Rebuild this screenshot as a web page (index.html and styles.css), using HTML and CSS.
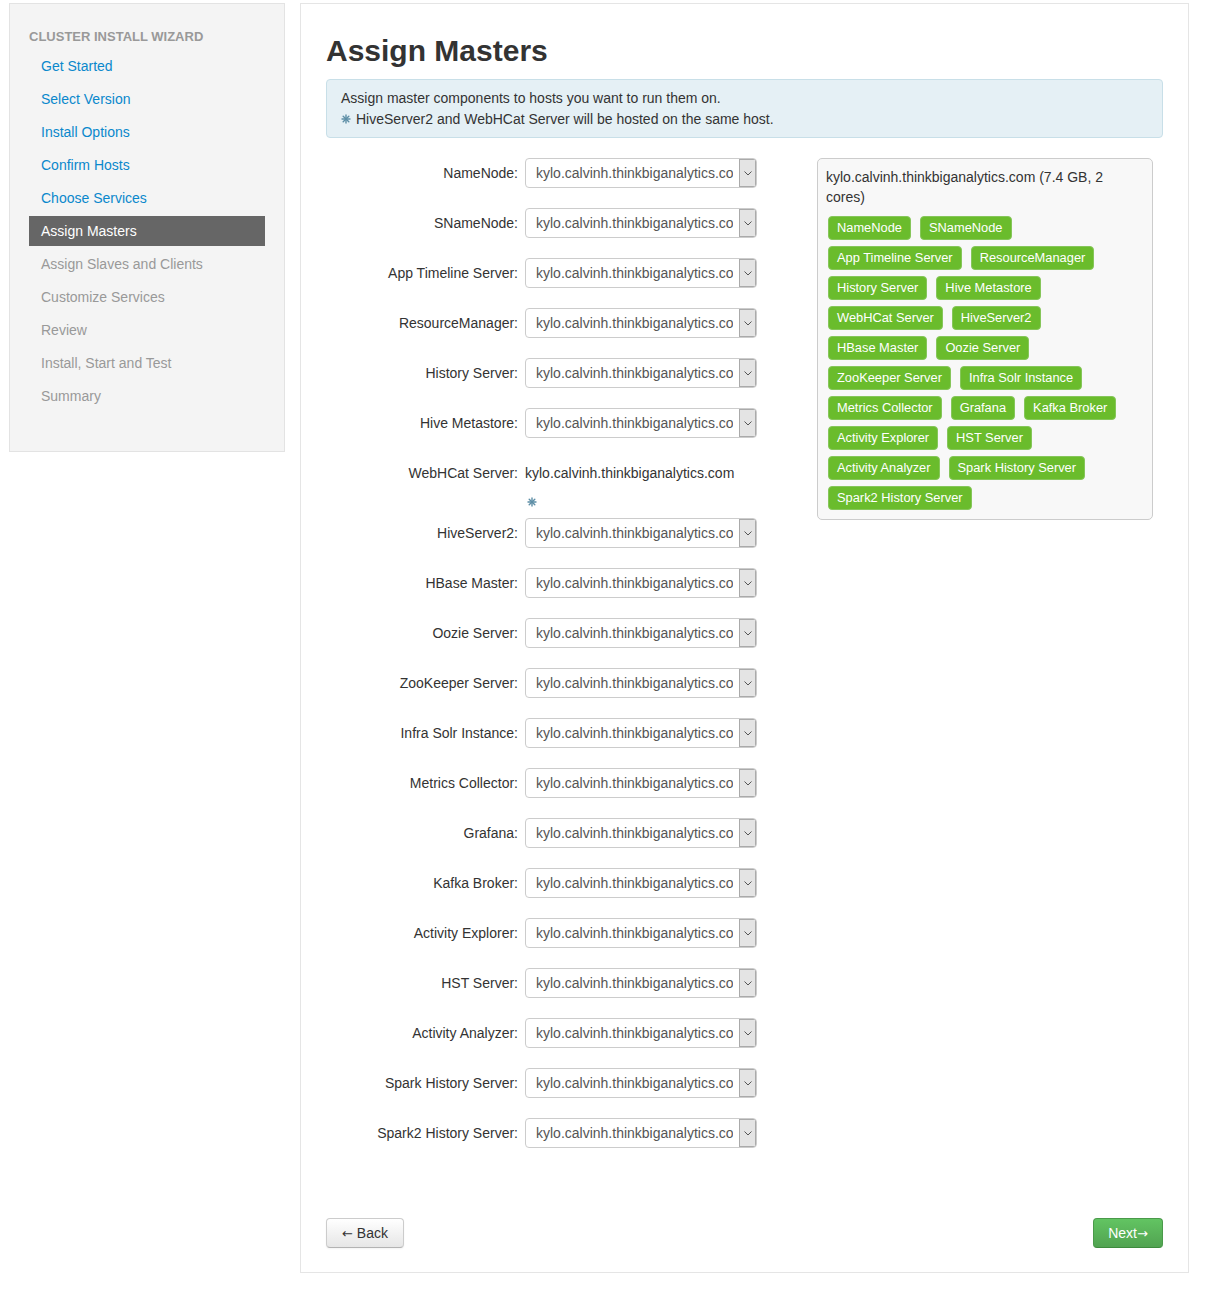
FILE: index.html
```html
<!DOCTYPE html>
<html>
<head>
<meta charset="utf-8">
<title>Assign Masters</title>
<link rel="stylesheet" href="styles.css">
</head>
<body>
<div class="page">
  <aside class="sidebar">
    <div class="side-title">CLUSTER INSTALL WIZARD</div>
    <ul class="steps">
      <li class="step done">Get Started</li>
      <li class="step done">Select Version</li>
      <li class="step done">Install Options</li>
      <li class="step done">Confirm Hosts</li>
      <li class="step done">Choose Services</li>
      <li class="step active">Assign Masters</li>
      <li class="step todo">Assign Slaves and Clients</li>
      <li class="step todo">Customize Services</li>
      <li class="step todo">Review</li>
      <li class="step todo">Install, Start and Test</li>
      <li class="step todo">Summary</li>
    </ul>
  </aside>

  <main class="panel">
    <h2 class="title">Assign Masters</h2>
    <div class="alert">
      <div>Assign master components to hosts you want to run them on.</div>
      <div class="alert-line"><svg class="ast" viewBox="0 0 10 10"><g stroke="currentColor" stroke-width="1.4" stroke-linecap="round"><line x1="5" y1="1" x2="5" y2="9"/><line x1="1" y1="5" x2="9" y2="5"/><line x1="2.2" y1="2.2" x2="7.8" y2="7.8"/><line x1="7.8" y1="2.2" x2="2.2" y2="7.8"/></g></svg> HiveServer2 and WebHCat Server will be hosted on the same host.</div>
    </div>

    <div class="assign">
      <div class="form">
        <div class="row"><label class="lbl">NameNode:</label><div class="sel"><span class="sel-text">kylo.calvinh.thinkbiganalytics.com</span><span class="sel-btn"><svg viewBox="0 0 8 5"><path d="M0.5 0.5 L4 4 L7.5 0.5" fill="none" stroke="#555" stroke-width="1"/></svg></span></div></div>
        <div class="row"><label class="lbl">SNameNode:</label><div class="sel"><span class="sel-text">kylo.calvinh.thinkbiganalytics.com</span><span class="sel-btn"><svg viewBox="0 0 8 5"><path d="M0.5 0.5 L4 4 L7.5 0.5" fill="none" stroke="#555" stroke-width="1"/></svg></span></div></div>
        <div class="row"><label class="lbl">App Timeline Server:</label><div class="sel"><span class="sel-text">kylo.calvinh.thinkbiganalytics.com</span><span class="sel-btn"><svg viewBox="0 0 8 5"><path d="M0.5 0.5 L4 4 L7.5 0.5" fill="none" stroke="#555" stroke-width="1"/></svg></span></div></div>
        <div class="row"><label class="lbl">ResourceManager:</label><div class="sel"><span class="sel-text">kylo.calvinh.thinkbiganalytics.com</span><span class="sel-btn"><svg viewBox="0 0 8 5"><path d="M0.5 0.5 L4 4 L7.5 0.5" fill="none" stroke="#555" stroke-width="1"/></svg></span></div></div>
        <div class="row"><label class="lbl">History Server:</label><div class="sel"><span class="sel-text">kylo.calvinh.thinkbiganalytics.com</span><span class="sel-btn"><svg viewBox="0 0 8 5"><path d="M0.5 0.5 L4 4 L7.5 0.5" fill="none" stroke="#555" stroke-width="1"/></svg></span></div></div>
        <div class="row"><label class="lbl">Hive Metastore:</label><div class="sel"><span class="sel-text">kylo.calvinh.thinkbiganalytics.com</span><span class="sel-btn"><svg viewBox="0 0 8 5"><path d="M0.5 0.5 L4 4 L7.5 0.5" fill="none" stroke="#555" stroke-width="1"/></svg></span></div></div>
        <div class="row row-static"><label class="lbl">WebHCat Server:</label><div class="static">kylo.calvinh.thinkbiganalytics.com</div></div>
        <div class="ast-row"><svg class="ast" viewBox="0 0 10 10"><g stroke="currentColor" stroke-width="1.4" stroke-linecap="round"><line x1="5" y1="1" x2="5" y2="9"/><line x1="1" y1="5" x2="9" y2="5"/><line x1="2.2" y1="2.2" x2="7.8" y2="7.8"/><line x1="7.8" y1="2.2" x2="2.2" y2="7.8"/></g></svg></div>
        <div class="row"><label class="lbl">HiveServer2:</label><div class="sel"><span class="sel-text">kylo.calvinh.thinkbiganalytics.com</span><span class="sel-btn"><svg viewBox="0 0 8 5"><path d="M0.5 0.5 L4 4 L7.5 0.5" fill="none" stroke="#555" stroke-width="1"/></svg></span></div></div>
        <div class="row"><label class="lbl">HBase Master:</label><div class="sel"><span class="sel-text">kylo.calvinh.thinkbiganalytics.com</span><span class="sel-btn"><svg viewBox="0 0 8 5"><path d="M0.5 0.5 L4 4 L7.5 0.5" fill="none" stroke="#555" stroke-width="1"/></svg></span></div></div>
        <div class="row"><label class="lbl">Oozie Server:</label><div class="sel"><span class="sel-text">kylo.calvinh.thinkbiganalytics.com</span><span class="sel-btn"><svg viewBox="0 0 8 5"><path d="M0.5 0.5 L4 4 L7.5 0.5" fill="none" stroke="#555" stroke-width="1"/></svg></span></div></div>
        <div class="row"><label class="lbl">ZooKeeper Server:</label><div class="sel"><span class="sel-text">kylo.calvinh.thinkbiganalytics.com</span><span class="sel-btn"><svg viewBox="0 0 8 5"><path d="M0.5 0.5 L4 4 L7.5 0.5" fill="none" stroke="#555" stroke-width="1"/></svg></span></div></div>
        <div class="row"><label class="lbl">Infra Solr Instance:</label><div class="sel"><span class="sel-text">kylo.calvinh.thinkbiganalytics.com</span><span class="sel-btn"><svg viewBox="0 0 8 5"><path d="M0.5 0.5 L4 4 L7.5 0.5" fill="none" stroke="#555" stroke-width="1"/></svg></span></div></div>
        <div class="row"><label class="lbl">Metrics Collector:</label><div class="sel"><span class="sel-text">kylo.calvinh.thinkbiganalytics.com</span><span class="sel-btn"><svg viewBox="0 0 8 5"><path d="M0.5 0.5 L4 4 L7.5 0.5" fill="none" stroke="#555" stroke-width="1"/></svg></span></div></div>
        <div class="row"><label class="lbl">Grafana:</label><div class="sel"><span class="sel-text">kylo.calvinh.thinkbiganalytics.com</span><span class="sel-btn"><svg viewBox="0 0 8 5"><path d="M0.5 0.5 L4 4 L7.5 0.5" fill="none" stroke="#555" stroke-width="1"/></svg></span></div></div>
        <div class="row"><label class="lbl">Kafka Broker:</label><div class="sel"><span class="sel-text">kylo.calvinh.thinkbiganalytics.com</span><span class="sel-btn"><svg viewBox="0 0 8 5"><path d="M0.5 0.5 L4 4 L7.5 0.5" fill="none" stroke="#555" stroke-width="1"/></svg></span></div></div>
        <div class="row"><label class="lbl">Activity Explorer:</label><div class="sel"><span class="sel-text">kylo.calvinh.thinkbiganalytics.com</span><span class="sel-btn"><svg viewBox="0 0 8 5"><path d="M0.5 0.5 L4 4 L7.5 0.5" fill="none" stroke="#555" stroke-width="1"/></svg></span></div></div>
        <div class="row"><label class="lbl">HST Server:</label><div class="sel"><span class="sel-text">kylo.calvinh.thinkbiganalytics.com</span><span class="sel-btn"><svg viewBox="0 0 8 5"><path d="M0.5 0.5 L4 4 L7.5 0.5" fill="none" stroke="#555" stroke-width="1"/></svg></span></div></div>
        <div class="row"><label class="lbl">Activity Analyzer:</label><div class="sel"><span class="sel-text">kylo.calvinh.thinkbiganalytics.com</span><span class="sel-btn"><svg viewBox="0 0 8 5"><path d="M0.5 0.5 L4 4 L7.5 0.5" fill="none" stroke="#555" stroke-width="1"/></svg></span></div></div>
        <div class="row"><label class="lbl">Spark History Server:</label><div class="sel"><span class="sel-text">kylo.calvinh.thinkbiganalytics.com</span><span class="sel-btn"><svg viewBox="0 0 8 5"><path d="M0.5 0.5 L4 4 L7.5 0.5" fill="none" stroke="#555" stroke-width="1"/></svg></span></div></div>
        <div class="row"><label class="lbl">Spark2 History Server:</label><div class="sel"><span class="sel-text">kylo.calvinh.thinkbiganalytics.com</span><span class="sel-btn"><svg viewBox="0 0 8 5"><path d="M0.5 0.5 L4 4 L7.5 0.5" fill="none" stroke="#555" stroke-width="1"/></svg></span></div></div>
      </div>

      <div class="hostbox">
        <div class="host">kylo.calvinh.thinkbiganalytics.com (7.4 GB, 2 cores)</div>
        <div class="badges">
          <span class="badge">NameNode</span>
          <span class="badge">SNameNode</span>
          <span class="badge">App Timeline Server</span>
          <span class="badge">ResourceManager</span>
          <span class="badge">History Server</span>
          <span class="badge">Hive Metastore</span>
          <span class="badge">WebHCat Server</span>
          <span class="badge">HiveServer2</span>
          <span class="badge">HBase Master</span>
          <span class="badge">Oozie Server</span>
          <span class="badge">ZooKeeper Server</span>
          <span class="badge">Infra Solr Instance</span>
          <span class="badge">Metrics Collector</span>
          <span class="badge">Grafana</span>
          <span class="badge">Kafka Broker</span>
          <span class="badge">Activity Explorer</span>
          <span class="badge">HST Server</span>
          <span class="badge">Activity Analyzer</span>
          <span class="badge">Spark History Server</span>
          <span class="badge">Spark2 History Server</span>
        </div>
      </div>
    </div>

    <div class="actions">
      <button class="btn btn-back"><span class="arr">&larr;</span> Back</button>
      <button class="btn btn-next">Next<span class="arr">&rarr;</span></button>
    </div>
  </main>
</div>
</body>
</html>
```

FILE: styles.css
```css
* { box-sizing: border-box; }

body {
  margin: 0;
  font-family: "Liberation Sans", Arial, sans-serif;
  font-size: 14px;
  color: #333;
  background: #fff;
}

.page {
  display: flex;
  align-items: flex-start;
  padding: 3px 0 0 9px;
}

/* Sidebar */
.sidebar {
  width: 276px;
  background: #f4f4f4;
  border: 1px solid #e3e3e3;
  padding: 23px 19px 40px 19px;
}

.side-title {
  font-size: 13px;
  font-weight: bold;
  color: #999;
  line-height: 20px;
  margin-bottom: 4px;
}

.steps {
  list-style: none;
  margin: 0;
  padding: 0;
}

.step {
  height: 30px;
  line-height: 30px;
  padding-left: 12px;
  margin-bottom: 3px;
  font-size: 14px;
}
.step:last-child { margin-bottom: 0; }
.step.done { color: #0a88cc; }
.step.todo { color: #999; }
.step.active { background: #666; color: #fff; }

/* Main panel */
.panel {
  width: 889px;
  margin-left: 15px;
  border: 1px solid #e5e5e5;
  padding: 29px 25px 24px 25px;
}

.title {
  margin: 0 0 10px 0;
  font-size: 30px;
  line-height: 36px;
  font-weight: bold;
  color: #333;
}

.alert {
  background: #e5f0f5;
  border: 1px solid #c8dfe8;
  border-radius: 4px;
  padding: 8px 14px;
  line-height: 20px;
  color: #333;
}

.alert-line { display: flex; align-items: center; gap: 5px; margin-top: 1px; }

.ast {
  width: 10px;
  height: 10px;
  color: #5d8ea6;
  display: block;
}

/* Assign area */
.assign {
  display: flex;
  margin-top: 20px;
  align-items: flex-start;
}

.form { width: 491px; }

.row {
  display: flex;
  align-items: center;
  height: 30px;
  margin-bottom: 20px;
}

.lbl {
  width: 192px;
  text-align: right;
  margin-right: 7px;
  color: #333;
}

.sel {
  width: 232px;
  height: 30px;
  border: 1px solid #ccc;
  border-radius: 4px;
  background: #fff;
  display: flex;
  align-items: stretch;
  overflow: hidden;
}

.sel-text {
  flex: 1;
  overflow: hidden;
  white-space: nowrap;
  margin-left: 10px;
  margin-right: 6px;
  line-height: 28px;
  color: #555;
}

.sel-btn {
  width: 17px;
  background: #e4e4e4;
  border: 1px solid #aaa;
  display: flex;
  align-items: center;
  justify-content: center;
}
.sel-btn svg { width: 8px; height: 5px; display: block; }

.row-static { margin-bottom: 0; }
.static { color: #333; }

.ast-row {
  height: 10px;
  margin: 9px 0 11px 0;
  padding-left: 201px;
}

/* Host box */
.hostbox {
  width: 336px;
  background: #f8f8f8;
  border: 1px solid #ccc;
  border-radius: 5px;
  padding: 8px 21px 3px 8px;
}

.host {
  line-height: 20px;
  color: #333;
  margin-bottom: 9px;
}

.badges {
  display: flex;
  flex-wrap: wrap;
  gap: 6px 9px;
  padding-left: 2px;
  margin-bottom: 6px;
}

.badge {
  display: inline-block;
  height: 24px;
  line-height: 22px;
  padding: 0 8px;
  font-size: 12.85px;
  color: #fff;
  background: #6abc2c;
  border: 1px solid #86c65a;
  border-radius: 4px;
  white-space: nowrap;
}

/* Buttons */
.actions {
  display: flex;
  justify-content: space-between;
  margin-top: 50px;
}

.btn {
  height: 30px;
  font-family: "Liberation Sans", Arial, sans-serif;
  font-size: 14px;
  border-radius: 4px;
  padding: 0;
  cursor: pointer;
}

.arr { font-family: "DejaVu Sans", sans-serif; font-size: 13px; }

.btn-back {
  width: 78px;
  color: #333;
  background: linear-gradient(#ffffff, #e6e6e6);
  border: 1px solid #ccc;
  border-bottom-color: #b3b3b3;
  box-shadow: inset 0 1px 0 rgba(255,255,255,.2), 0 1px 2px rgba(0,0,0,.05);
}

.btn-next {
  width: 70px;
  color: #fff;
  background: linear-gradient(#62c462, #51a351);
  border: 1px solid #4a9a4a;
  border-bottom-color: #3d8b3d;
}
```
